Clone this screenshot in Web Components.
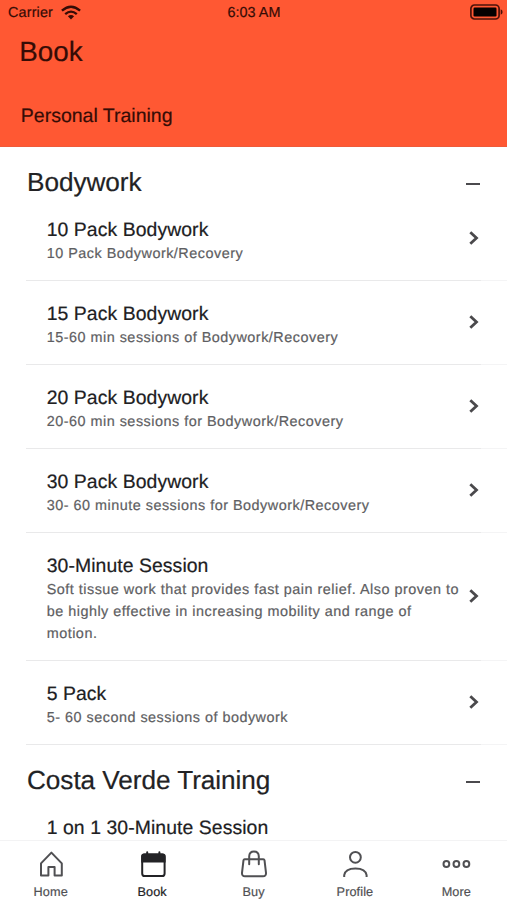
<!DOCTYPE html>
<html lang="en">
<head>
<meta charset="utf-8">
<title>Book</title>
<style>
html,body{margin:0;height:100%;background:#fff}
body{font-family:"Liberation Sans",Arial,sans-serif;color:#222;overflow:hidden;text-rendering:geometricPrecision;-webkit-text-stroke:.2px currentColor}
</style>
</head>
<body>
<booking-app></booking-app>
<script>
function define(name, html) {
  const t = document.createElement('template');
  t.innerHTML = html;
  customElements.define(name, class extends HTMLElement {
    constructor() {
      super();
      this.attachShadow({mode: 'open'}).append(t.content.cloneNode(true));
    }
  });
}

define('status-bar', `
<style>
:host{display:grid;grid-template-columns:1fr auto 1fr;align-items:center;height:24px;box-sizing:border-box;padding:0 4px 0 8px;font-size:14.4px;color:#350c06}
.left{display:flex;align-items:center;gap:8px;letter-spacing:.15px}
.left span,.time{padding-top:2px}
.time{letter-spacing:.03px;margin-right:3px}
.right{display:flex;justify-content:flex-end}
svg{display:block}
</style>
<div class="left"><span>Carrier</span>
<svg width="20" height="15" viewBox="0 0 20 15" fill="none" stroke="#350c06" stroke-width="2.3"><path d="M.9 5.7Q10-2.3 19.1 5.7"/><path d="M4.2 9.2Q10 4 15.8 9.2"/><path d="M10 14.4L6.9 11.3Q10 8.6 13.1 11.3Z" fill="#350c06" stroke="none"/></svg></div>
<span class="time">6:03 AM</span>
<div class="right"><svg width="33" height="16" viewBox="0 0 33 16"><rect x=".9" y="1" width="28.2" height="14" rx="3.6" fill="none" stroke="#4c120a" stroke-width="1.7"/><rect x="3.5" y="3.6" width="23" height="8.8" rx="1.2" fill="#050101"/><path d="M30.7 5.3Q32.6 6 32.6 8T30.7 10.7Z" fill="#4c120a"/></svg></div>`);

define('app-header', `
<style>
:host{display:flex;flex-direction:column;height:147px;background:#ff5833;color:#350c06;flex:none;box-sizing:border-box;border-bottom:1px solid #ef5a3a}
h1{margin:12px 0 0 19.3px;font:400 27.8px/32px "Liberation Sans",Arial,sans-serif;letter-spacing:0}
.sub{margin:36px 0 0 20.8px;font-size:19.5px;line-height:24px;letter-spacing:0}
</style>
<status-bar></status-bar>
<h1><slot name="title"></slot></h1>
<div class="sub"><slot></slot></div>`);

define('service-group', `
<style>
:host{display:block}
header{display:flex;align-items:center;justify-content:space-between;height:50px;box-sizing:border-box;padding:20px 27px 0 27px}
h2{margin:0;font:400 26.2px/30px "Liberation Sans",Arial,sans-serif;letter-spacing:-.06px;color:#222224}
i{display:block;width:14px;height:2px;background:#4b4a4d;margin-top:3px}
</style>
<header><h2><slot name="title"></slot></h2><i></i></header>
<slot></slot>`);

define('service-item', `
<style>
:host{display:block}
.row{display:grid;grid-template-columns:1fr 10px;align-items:center;padding:21px 28px 15px 46.7px}
.title{font-size:19.4px;line-height:24px;letter-spacing:.07px;color:#202022}
.desc{padding-top:1px;font-size:14.4px;line-height:22px;min-height:22px;letter-spacing:.5px;color:#5e5e62;max-width:417px}
:host([tall]) .desc{min-height:44px}
svg{display:block;margin-top:-7px}
hr{border:0;height:1px;margin:0 0 0 26px;background:linear-gradient(90deg,#e9e9ea 455px,#f4f4f5 455px)}
</style>
<div class="row"><div><div class="title"><slot name="title"></slot></div><div class="desc"><slot></slot></div></div>
<svg width="10" height="14" viewBox="0 0 10 14" fill="none" stroke="#4a494c" stroke-width="2.8"><path d="M1.3 1.2L7.5 7L1.3 12.8"/></svg></div>
<hr>`);

define('tab-item', `
<style>
:host{display:flex;flex-direction:column;align-items:center;color:#505053;flex:1}
.icon{height:30px;margin-top:9px;display:flex}
.label{font-size:12.7px;line-height:16px;margin-top:4px;letter-spacing:.1px}
:host([active]){color:#232326}
</style>
<div class="icon"><slot name="icon"></slot></div>
<div class="label"><slot></slot></div>`);

define('tab-bar', `
<style>
:host{display:flex;height:60px;box-sizing:border-box;border-top:1px solid #f3f3f4;background:#fff;flex:none}
svg{display:block;fill:none;stroke:currentColor;stroke-width:2}
</style>
<tab-item><svg slot="icon" width="30" height="30" viewBox="0 0 30 30" stroke-linejoin="round"><path d="M5 13.4L15.4 2.6L25.8 13.4V25.6H18.6V17H12.4V25.6H5Z"/></svg>Home</tab-item>
<tab-item active><svg slot="icon" width="30" height="30" viewBox="0 0 30 30"><rect x="5.2" y="4.6" width="22.4" height="21.4" rx="2.6"/><path d="M4.2 12.4V6.4Q4.2 3.6 7 3.6H25.8Q28.6 3.6 28.6 6.4V12.4Z" fill="currentColor" stroke="none"/><path d="M10.2 2.2V6M22.4 2.2V6" stroke-linecap="round"/></svg>Book</tab-item>
<tab-item><svg slot="icon" width="30" height="30" viewBox="0 0 30 30"><path d="M5.7 9.2H24.3Q25.3 9.2 25.5 10.2L27 22.8Q27.2 26.2 24 26.2H6Q2.8 26.2 3 22.8L4.5 10.2Q4.7 9.2 5.7 9.2Z"/><path d="M10.2 14.2V6.2Q10.4 1.6 15 1.6T19.8 6.2V14.2" stroke-linecap="round"/></svg>Buy</tab-item>
<tab-item><svg slot="icon" width="30" height="30" viewBox="0 0 30 30"><circle cx="15.4" cy="7.3" r="5.4"/><path d="M4.2 27V25.2Q5.2 18.4 15.4 18.4T26.6 25.2V27"/></svg>Profile</tab-item>
<tab-item><svg slot="icon" width="30" height="30" viewBox="0 0 30 30"><circle cx="5.4" cy="14" r="2.9"/><circle cx="15.4" cy="14" r="2.9"/><circle cx="25.4" cy="14" r="2.9"/></svg>More</tab-item>`);

define('booking-app', `
<style>
:host{display:flex;flex-direction:column;height:900px;width:507px;overflow:hidden;background:#fff}
main{flex:1;min-height:0;overflow:hidden}
</style>
<app-header><span slot="title">Book</span>Personal Training</app-header>
<main>
<service-group><span slot="title">Bodywork</span>
<service-item><span slot="title">10 Pack Bodywork</span>10 Pack Bodywork/Recovery</service-item>
<service-item><span slot="title">15 Pack Bodywork</span>15-60 min sessions of Bodywork/Recovery</service-item>
<service-item><span slot="title">20 Pack Bodywork</span>20-60 min sessions for Bodywork/Recovery</service-item>
<service-item><span slot="title">30 Pack Bodywork</span>30- 60 minute sessions for Bodywork/Recovery</service-item>
<service-item><span slot="title">30-Minute Session</span>Soft tissue work that provides fast pain relief. Also proven to be highly effective in increasing mobility and range of motion.</service-item>
<service-item><span slot="title">5 Pack</span>5- 60 second sessions of bodywork</service-item>
</service-group>
<service-group><span slot="title">Costa Verde Training</span>
<service-item tall><span slot="title">1 on 1 30-Minute Session</span></service-item>
</service-group>
</main>
<tab-bar></tab-bar>`);
</script>
</body>
</html>
